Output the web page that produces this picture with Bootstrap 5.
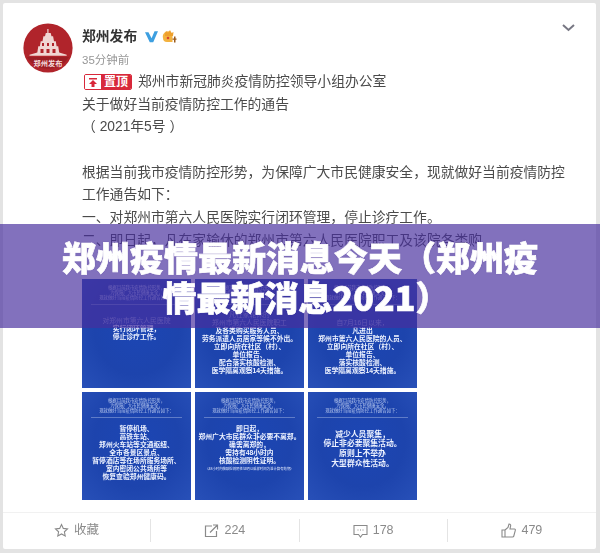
<!DOCTYPE html>
<html lang="zh-CN">
<head>
<meta charset="utf-8">
<title>郑州疫情最新消息今天</title>
<link href="https://cdn.jsdelivr.net/npm/bootstrap@5.3.0/dist/css/bootstrap.min.css" rel="stylesheet">
<style>
html,body{height:100%}
body{margin:0;background:#e3e3e3;font-family:"Liberation Sans","Noto Sans CJK SC",sans-serif;color:#444;overflow:hidden;position:relative}
.shot-wrap{padding:3px 4px 4px 3px;height:553px}
.post-card{height:546px;background:#fff;border:0;border-radius:2px;padding:20px 0 0 20px;filter:blur(.5px)}
.ava{width:50px;height:50px;flex:none;margin-right:9px}
.post-main{flex:1;min-width:0;position:relative}
.uname{font-size:13.8px;font-weight:700;line-height:20px;margin-top:3px;color:#333;height:22px}
.utime{font-size:11.5px;line-height:16px;color:#969696;margin-top:4px;height:16px}
.post-body{font-size:13.8px;line-height:22.7px;margin-top:3px;white-space:nowrap;color:#4a4a4a}
.post-body>div{height:22.7px}
.pc{font-family:"Noto Sans CJK TC",sans-serif;line-height:0}
.top-tag{display:inline-flex;width:48px;height:16px;margin:0 6px 0 2px;vertical-align:-3px;border:1px solid #d8283a;border-radius:2px;overflow:hidden;font-size:12px;line-height:14px;font-weight:700;color:#fff}
.top-tag svg{flex:none;width:16px;height:14px;background:#fff}
.top-tag span{flex:1;background:#d8283a;text-align:center}
.chev{position:absolute;right:21px;top:1px}
.poster-grid{display:grid;grid-template-columns:109px 109px 109px;grid-template-rows:109px 108px;gap:4px;margin-top:26.4px}
.poster{background:radial-gradient(ellipse at 50% 45%,#1c46b4 0%,#1d44ad 55%,#2850b8 100%);color:#eef3ff;text-align:center;overflow:hidden;padding:5px 3px 0}
.poster-head{font-size:4.4px;line-height:5px;color:#b9c9ee;height:21px;padding-top:1px;border-bottom:1px solid #5f7cc8;margin:0 6px;white-space:nowrap;overflow:hidden}
.poster-sub{font-size:6.8px;line-height:8px;color:#aebbe6;white-space:nowrap;opacity:.8}
.poster-txt{font-size:6.8px;line-height:8.1px;font-weight:700;white-space:nowrap}
.gap-a{margin-top:12px}
.gap-b{margin-top:6px}
.gap-c{margin-top:14px}
.gap-d{margin-top:7px}
.poster-big{font-size:7.8px;line-height:9.6px;font-weight:700;white-space:nowrap;margin-top:12px}
.poster-tiny{font-size:3.4px;line-height:9px;white-space:nowrap;color:#dfe7fb}
.post-foot{position:absolute;left:0;right:0;top:509px;height:37px;border-top:1px solid #f1f1f1;margin:0;font-size:12.5px;color:#8a8a8a}
.foot-cell{height:23px;margin-top:6px;padding:0;gap:5px;border-right:1px solid #e4e4e4}
.foot-cell:last-child{border-right:0}
.foot-cell svg{flex:none}
.title-band{position:absolute;left:0;right:0;top:224px;height:104px;background:rgba(71,45,157,.68);display:flex;align-items:center;justify-content:center;padding:0 50px}
.title-band h1{margin:0;font-family:"Noto Sans CJK SC","Liberation Sans",sans-serif;font-size:34px;line-height:40px;font-weight:900;-webkit-text-stroke:.7px #fff;color:#fff;text-align:center;text-shadow:0 0 2px rgba(60,40,130,.3);position:relative;top:1px;filter:blur(.3px)}
.paren-end{margin-right:-12px}
</style>
</head>
<body>
<div class="shot-wrap">
  <div class="card post-card d-flex flex-row">
    <svg class="ava" viewBox="0 0 50 50" role="img" aria-label="郑州发布头像">
      <circle cx="25" cy="25" r="24.6" fill="#b0242b"/>
      <path fill="#f0d6d3" d="M24.300 6h1.200v4h2.200l.8 3.200h1.600l.9 5h1.800l.8 5h1.600l1 6.200 7.500 2.400v1H6.500v-1l7.800-2.400 1-6.200h1.600l.8-5h1.800l.9-5h1.600l.8-3.200h1.500z"/>
      <path fill="#b0242b" d="M19 20h2v3h-2zM24 20h2v3h-2zM29 20h2v3h-2zM17.500 26h3v4h-3zM23.500 26h3v4h-3zM29.500 26h3v4h-3z"/>
      <path fill="#8d1a20" d="M4 34h42a24.600 24.600 0 0 1-42 0z" opacity=".55"/>
      <text x="25" y="42.500" text-anchor="middle" font-size="7.200" font-weight="700" fill="#f6dcdc" font-family="Noto Sans CJK SC,sans-serif">郑州发布</text>
    </svg>
    <div class="post-main">
      <div class="uname d-flex align-items-center">郑州发布
        <svg class="ms-2" width="13" height="12" viewBox="0 0 15 13" aria-hidden="true"><path d="M0 1h4l3.600 7L11 0h4L9.500 12.500h-4z" fill="#3d9fe0"/></svg>
        <svg class="ms-1" width="16" height="16" viewBox="0 0 16 16" aria-hidden="true"><path d="M1 9a5 5 0 0 1 10-3v7H5a4 4 0 0 1-4-4z" fill="#f3b23f"/><path d="M3 5l1-3 2 2 2-3 1.500 3 2-1-.5 4H3z" fill="#eea02c"/><path d="M10.500 7h4.500v6.500h-4.500z" fill="#fff"/><path d="M12 7.500h1.500v6H12zM10.500 9.500h4v1.200h-4z" fill="#9a5a1c"/><circle cx="6" cy="9" r="1.300" fill="#d8452c"/></svg>
      </div>
      <div class="utime">35分钟前</div>
      <div class="post-body">
        <div><span class="top-tag"><svg viewBox="0 0 16 14" aria-hidden="true"><path d="M4 3h8v1.400H4zM8 5l4 4H9.500v3h-3V9H4z" fill="#d8283a"/></svg><span>置顶</span></span>郑州市新冠肺炎疫情防控领导小组办公室</div>
        <div>关于做好当前疫情防控工作的通告</div>
        <div>（ 2021年5号 ）</div>
        <div>&nbsp;</div>
        <div>根据当前我市疫情防控形势<span class="pc">，</span>为保障广大市民健康安全<span class="pc">，</span>现就做好当前疫情防控</div>
        <div>工作通告如下<span class="pc">：</span></div>
        <div>一、对郑州市第六人民医院实行闭环管理<span class="pc">，</span>停止诊疗工作。</div>
        <div>二、即日起<span class="pc">，</span>凡在家输休的郑州市第六人民医院职工及该院各类购</div>
      </div>
      <svg class="chev" width="13" height="8" viewBox="0 0 13 8" aria-hidden="true"><path d="M1 1l5.500 5L12 1" fill="none" stroke="#777783" stroke-width="2"/></svg>
      <div class="poster-grid">
        <div class="poster">
          <div class="poster-head">根据目前我市疫情防控形势，<br>为保障广大市民健康安全，<br>现就做好当前疫情防控工作通告如下：</div>
          <div class="poster-sub gap-a">对郑州市第六人民医院</div>
          <div class="poster-txt">实行闭环管理，<br>停止诊疗工作。</div>
        </div>
        <div class="poster">
          <div class="poster-head">根据目前我市疫情防控形势，<br>为保障广大市民健康安全，<br>现就做好当前疫情防控工作通告如下：</div>
          <div class="poster-sub gap-b">凡在家轮休的<br>郑州市第六人民医院职工</div>
          <div class="poster-txt">及各类购买服务人员、<br>劳务派遣人员居家等候不外出。<br>立即向所在社区（村）、<br>单位报告、<br>配合落实核酸检测、<br>医学隔离观察14天措施。</div>
        </div>
        <div class="poster">
          <div class="poster-head">根据目前我市疫情防控形势，<br>为保障广大市民健康安全，<br>现就做好当前疫情防控工作通告如下：</div>
          <div class="poster-sub gap-c">自7月16日以来，</div>
          <div class="poster-txt">凡进出<br>郑州市第六人民医院的人员、<br>立即向所在社区（村）、<br>单位报告、<br>落实核酸检测、<br>医学隔离观察14天措施。</div>
        </div>
        <div class="poster">
          <div class="poster-head">根据目前我市疫情防控形势，<br>为保障广大市民健康安全，<br>现就做好当前疫情防控工作通告如下：</div>
          <div class="poster-txt gap-d">暂停机场、<br>高铁车站、<br>郑州火车站等交通枢纽、<br>全市各景区景点、<br>暂停酒店等在场所服务场所、<br>室内密闭公共场所等<br>恢复查验郑州健康码。</div>
        </div>
        <div class="poster">
          <div class="poster-head">根据目前我市疫情防控形势，<br>为保障广大市民健康安全，<br>现就做好当前疫情防控工作通告如下：</div>
          <div class="poster-txt gap-d">即日起，<br>郑州广大市民群众非必要不离郑。<br>确需离郑的，<br>需持有48小时内<br>核酸检测阴性证明。</div>
          <div class="poster-tiny">（48小时内核酸检测阴性证明以采样时间为准计算有效期）</div>
        </div>
        <div class="poster">
          <div class="poster-head">根据目前我市疫情防控形势，<br>为保障广大市民健康安全，<br>现就做好当前疫情防控工作通告如下：</div>
          <div class="poster-big">减少人员聚集，<br>停止非必要聚集活动。<br>原则上不举办<br>大型群众性活动。</div>
        </div>
      </div>
    </div>
    <div class="row post-foot">
      <div class="col-3 foot-cell d-flex align-items-center justify-content-center">
        <svg width="15" height="15" viewBox="0 0 15 15" aria-hidden="true"><path d="M7.500 1.500l1.800 3.900 4.200.5-3.100 2.900.8 4.200-3.700-2.100-3.700 2.100.8-4.200L1.500 5.900l4.200-.5z" fill="none" stroke="#8a8a8a" stroke-width="1.100"/></svg><span>收藏</span>
      </div>
      <div class="col-3 foot-cell d-flex align-items-center justify-content-center">
        <svg width="15" height="14" viewBox="0 0 15 14" aria-hidden="true"><path d="M8 2H1.500v10.500h11V7M6 8.500L13 1.500M9 1h4.500v4.500" fill="none" stroke="#8a8a8a" stroke-width="1.200"/></svg><span>224</span>
      </div>
      <div class="col-3 foot-cell d-flex align-items-center justify-content-center">
        <svg width="15" height="14" viewBox="0 0 15 14" aria-hidden="true"><path d="M1 1.500h13v9H9.500L7.500 13l-2-2.500H1z" fill="none" stroke="#8a8a8a" stroke-width="1.100"/><path d="M4.500 6h1M7 6h1M9.500 6h1" stroke="#8a8a8a"/></svg><span>178</span>
      </div>
      <div class="col-3 foot-cell d-flex align-items-center justify-content-center">
        <svg width="15" height="15" viewBox="0 0 15 15" aria-hidden="true"><path d="M1 7h3v7H1zM4 7l3-2.500L8 1c1.500 0 2 1 1.500 2.500L9 6h4.500c.8 0 1 .7.800 1.300l-1.500 5.700c-.2.700-.6 1-1.300 1H4" fill="none" stroke="#8a8a8a" stroke-width="1.100"/></svg><span>479</span>
      </div>
    </div>
  </div>
</div>
<div class="title-band"><h1>郑州疫情最新消息今天（郑州疫情最新消息2021<span class="paren-end">）</span></h1></div>
<script src="https://cdn.jsdelivr.net/npm/bootstrap@5.3.0/dist/js/bootstrap.bundle.min.js"></script>
</body>
</html>
